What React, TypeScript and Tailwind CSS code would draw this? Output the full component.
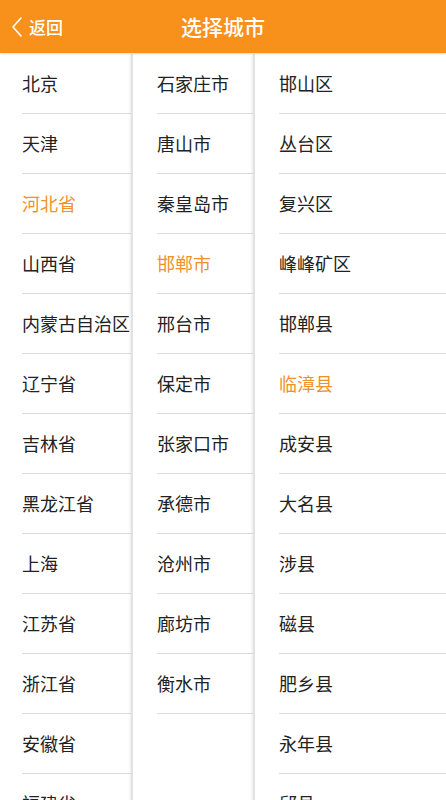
import React from 'react';

const PROVINCES = ['北京', '天津', '河北省', '山西省', '内蒙古自治区', '辽宁省', '吉林省', '黑龙江省', '上海', '江苏省', '浙江省', '安徽省', '福建省'];
const CITIES = ['石家庄市', '唐山市', '秦皇岛市', '邯郸市', '邢台市', '保定市', '张家口市', '承德市', '沧州市', '廊坊市', '衡水市'];
const COUNTIES = ['邯山区', '丛台区', '复兴区', '峰峰矿区', '邯郸县', '临漳县', '成安县', '大名县', '涉县', '磁县', '肥乡县', '永年县', '邱县'];

const Column = ({ items, active }: { items: string[]; active: string }) => (
  <div className="flex flex-col">
    {items.map(name => (
      <div
        key={name}
        className={`h-[60px] flex items-center border-b border-[#dcdcdc] text-[18px] whitespace-nowrap ${
          name === active ? 'text-[#f0902a]' : 'text-[#222]'
        }`}
      >
        {name}
      </div>
    ))}
  </div>
);

export default function App() {
  return (
    <div
      className="w-[446px] h-[800px] overflow-hidden bg-white flex flex-col"
      style={{ fontFamily: '"Noto Sans CJK SC", "Noto Sans", sans-serif' }}
    >
      {/* Header */}
      <div className="h-[53px] shrink-0 bg-[#f8901c] relative flex items-center justify-center shadow-[0_1px_2px_rgba(0,0,0,0.15)] z-10">
        <div className="absolute left-[11px] top-0 h-full flex items-center gap-[6px] text-white">
          <svg width="12" height="22" viewBox="0 0 12 22" fill="none">
            <path d="M10 2 L2 11 L10 20" stroke="white" strokeWidth="1.6" strokeLinecap="round" strokeLinejoin="round" />
          </svg>
          <span className="text-[17px] font-medium">返回</span>
        </div>
        <span className="text-white text-[21px] font-medium">选择城市</span>
      </div>

      {/* Columns */}
      <div className="flex-1 flex pt-px">
        <div className="w-[131px] shrink-0 pl-[22px]">
          <Column items={PROVINCES} active="河北省" />
        </div>
        <div className="w-[122px] shrink-0 pl-[24px] border-l-2 border-[#e2e2e2] shadow-[-1px_0_3px_rgba(0,0,0,0.08)]">
          <Column items={CITIES} active="邯郸市" />
        </div>
        <div className="flex-1 pl-[24px] border-l-2 border-[#e2e2e2] shadow-[-1px_0_3px_rgba(0,0,0,0.08)]">
          <Column items={COUNTIES} active="临漳县" />
        </div>
      </div>
    </div>
  );
}
